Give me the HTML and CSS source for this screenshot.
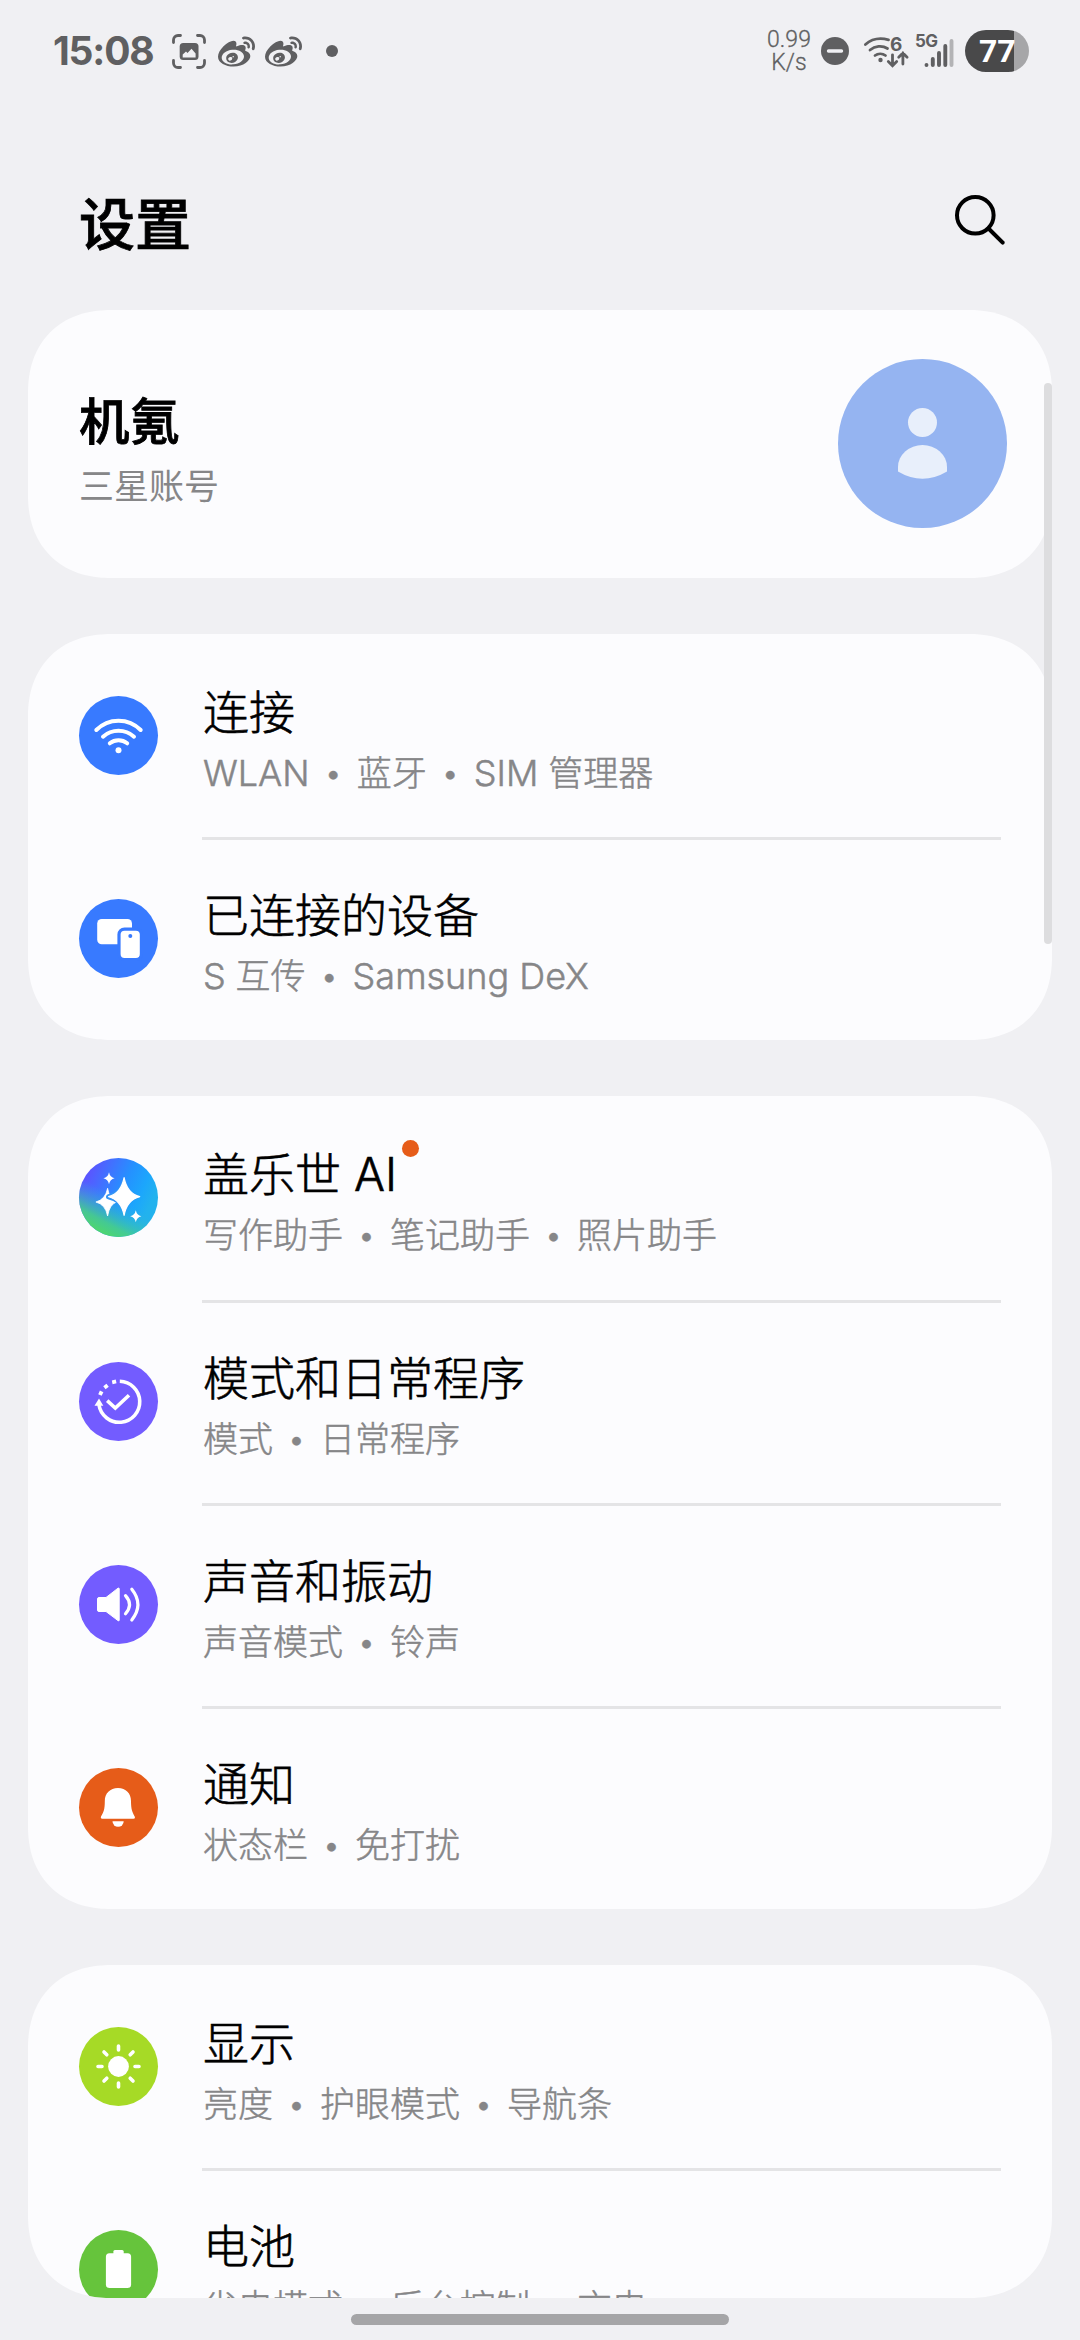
FILE: index.html
```html
<!DOCTYPE html>
<html lang="zh-CN">
<head>
<meta charset="utf-8">
<title>设置</title>
<link rel="stylesheet" href="styles.css">
</head>
<body>
<svg class="defs" width="0" height="0" aria-hidden="true">
  <defs>
    <symbol id="weibo" viewBox="0 2 24 20"><path d="M10.098 20.323c-3.977.391-7.414-1.406-7.672-4.02-.259-2.609 2.759-5.047 6.74-5.441 3.979-.394 7.413 1.404 7.671 4.018.259 2.6-2.759 5.049-6.737 5.439l-.002.004zM9.05 17.219c-.384.616-1.208.884-1.829.602-.612-.279-.793-.991-.406-1.593.379-.595 1.176-.861 1.793-.601.622.263.82.972.442 1.592zm1.27-1.627c-.141.237-.449.353-.689.253-.236-.09-.313-.361-.177-.586.138-.227.436-.346.672-.24.239.09.315.36.18.601l.014-.028zm.176-2.719c-1.893-.493-4.033.45-4.857 2.118-.836 1.704-.026 3.591 1.886 4.21 1.983.64 4.318-.341 5.132-2.179.8-1.793-.201-3.642-2.161-4.149zm7.563-1.224c-.346-.105-.57-.18-.405-.615.375-.977.42-1.804 0-2.404-.781-1.112-2.915-1.053-5.364-.03 0 0-.766.331-.571-.271.376-1.217.315-2.224-.27-2.809-1.338-1.337-4.869.045-7.888 3.08C1.309 10.87 0 13.273 0 15.348c0 3.981 5.099 6.395 10.086 6.395 6.536 0 10.888-3.801 10.888-6.82 0-1.822-1.547-2.854-2.915-3.284v.01zm1.908-5.092c-.766-.856-1.908-1.187-2.96-.962-.436.09-.706.511-.616.932.09.42.511.691.932.602.511-.105 1.067.044 1.442.465.376.421.466.977.316 1.473-.136.406.089.856.51.992.405.119.857-.105.992-.512.33-1.021.12-2.178-.646-3.035l.03.045zm2.418-2.195c-1.576-1.757-3.905-2.419-6.054-1.968-.496.104-.812.587-.706 1.081.104.496.586.813 1.082.707 1.532-.331 3.185.15 4.296 1.383 1.112 1.246 1.429 2.943.947 4.416-.165.48.106 1.007.586 1.157.479.165.991-.104 1.157-.586.675-2.088.241-4.478-1.338-6.235l.03.045z"/></symbol>
    <linearGradient id="ai-base" x1="0.1" y1="0.22" x2="0.9" y2="0.6">
      <stop offset="0" stop-color="#5a55ff"/><stop offset="0.55" stop-color="#2492ff"/><stop offset="0.8" stop-color="#1ca6fc"/><stop offset="1" stop-color="#22b2ee"/>
    </linearGradient>
    <linearGradient id="ai-green" x1="0.18" y1="0.9" x2="0.42" y2="0.46">
      <stop offset="0" stop-color="#4fd76c"/><stop offset="0.3" stop-color="#47cf88" stop-opacity="0.9"/><stop offset="1" stop-color="#28b0e8" stop-opacity="0"/>
    </linearGradient>
  </defs>
</svg>
<div class="screen">
  <header class="status">
    <div class="status-left">
      <span class="clock">15:08</span>
      <svg class="shot" viewBox="0 0 34 35" width="34" height="35">
        <g fill="none" stroke="#5f5f61" stroke-width="2.8" stroke-linecap="round"><path d="M1.5 8.5V6a4.5 4.5 0 0 1 4.5-4.5H8.5M25.5 1.5H28A4.500 4.500 0 0 1 32.500 6V8.500M32.500 26.500V29a4.500 4.500 0 0 1-4.500 4.500H25.500M8.500 33.500H6A4.500 4.500 0 0 1 1.500 29V26.500"/></g>
        <rect x="7.700" y="9" width="18.800" height="17" rx="3.500" fill="#5f5f61"/>
        <path d="M10.700 23.500V20.500L14 17.500L15.500 19L19.500 14.800L23.600 19.500V23.500Z" fill="#f0f0f3"/>
      </svg>
      <svg class="weibo" width="37" height="31"><use href="#weibo"/></svg>
      <svg class="weibo weibo-second" width="37" height="31"><use href="#weibo"/></svg>
      <span class="more-dot"></span>
    </div>
    <div class="status-right">
      <div class="speed"><span>0.99</span><span>K/s</span></div>
      <svg class="dnd" viewBox="0 0 28 28" width="28" height="28"><circle cx="14" cy="14" r="14" fill="#5f5f61"/><path d="M7.500 14H20.500" stroke="#f0f0f3" stroke-width="3.400" stroke-linecap="round"/></svg>
      <svg class="wifi" viewBox="0 0 46 34" width="46" height="34">
        <g fill="none" stroke="#5f5f61" stroke-width="2.800" stroke-linecap="round">
          <path d="M2.400 10.500C8 5.500 16 3.200 25.500 5.800"/><path d="M7 16C12 11.800 19 11 24.500 14.500"/><path d="M12 21.500C15 19.200 19.500 19.200 22.500 21.500"/>
          <path d="M29.500 20.800V31.500M25.300 27.500L29.500 31.700L33.700 27.500M39.900 30V19.200M35.700 23.200L39.900 19L44.100 23.200"/>
        </g>
        <circle cx="17.500" cy="26" r="2.200" fill="#5f5f61"/>
        <text class="wifi-gen" x="27" y="16.500">6</text>
      </svg>
      <svg class="signal" viewBox="0 0 40 36" width="40" height="36">
        <text class="net" x="0" y="14.200">5G</text>
        <g stroke="#5f5f61" stroke-width="3.900" stroke-linecap="round"><path d="M11.500 32V32.100M17.800 26V32M24 20V32M30.300 13V32"/><path d="M36.500 8V32" stroke="#b3b3b5"/></g>
      </svg>
      <div class="battery"><span>77</span></div>
    </div>
  </header>

  <div class="topbar">
    <h1>设置</h1>
    <svg class="search" viewBox="0 0 52 52" width="52" height="52"><g fill="none" stroke="#000" stroke-width="4" stroke-linecap="round"><circle cx="22.300" cy="22.300" r="18.300"/><path d="M35.500 35.500L49.700 49.700"/></g></svg>
  </div>

  <main class="list">
    <section class="card account">
      <div class="account-text">
        <div class="account-name">机氪</div>
        <div class="account-kind">三星账号</div>
      </div>
      <svg class="avatar" viewBox="0 0 169 169" width="169" height="169"><circle cx="84.500" cy="84.500" r="84.500" fill="#95b4f1"/><circle cx="84.500" cy="63.500" r="14.500" fill="#e8effb"/><path d="M60 112.500V108A24.500 22 0 0 1 109 108V112.500Q84.500 127 60 112.500Z" fill="#e8effb"/></svg>
    </section>

    <section class="card">
      <div class="row">
        <svg class="icon" viewBox="0 0 79 79"><circle cx="39.500" cy="39.500" r="39.500" fill="#387aff"/><g fill="none" stroke="#fff" stroke-width="4" stroke-linecap="round"><path d="M17.300 34A31 31 0 0 1 61.700 34"/><path d="M24 40.700A23 23 0 0 1 55 40.700"/><path d="M30.800 47.300A14 14 0 0 1 48.200 47.300"/></g><circle cx="39.500" cy="54.300" r="3" fill="#fff"/></svg>
        <div class="text"><div class="title">连接</div><div class="sub"><span class="latin">WLAN</span><i class="sep">•</i>蓝牙<i class="sep">•</i><span class="latin">SIM</span> 管理器</div></div>
      </div>
      <div class="row">
        <svg class="icon" viewBox="0 0 79 79"><circle cx="39.500" cy="39.500" r="39.500" fill="#387aff"/><rect x="18.200" y="20" width="34.800" height="25.300" rx="4.500" fill="#fff"/><rect x="40" y="30.100" width="22.400" height="30.400" rx="5.500" fill="#fff" stroke="#387aff" stroke-width="3.200"/><circle cx="51.300" cy="37" r="2" fill="#387aff"/></svg>
        <div class="text"><div class="title">已连接的设备</div><div class="sub"><span class="latin">S</span> 互传<i class="sep">•</i><span class="latin">Samsung DeX</span></div></div>
      </div>
    </section>

    <section class="card">
      <div class="row row-ai">
        <svg class="icon" viewBox="0 0 79 79"><circle cx="39.500" cy="39.500" r="39.500" fill="url(#ai-base)"/><circle cx="39.500" cy="39.500" r="39.500" fill="url(#ai-green)"/>
          <path d="M28.600 30.300Q30.500 41.500 37.500 44Q30.500 46.500 28.600 58Q26.500 46.500 16.900 44Q26.500 41.500 28.600 30.300Z" fill="#fff" stroke="#fff" stroke-width="0.800"/>
          <path d="M45.100 24Q47.500 36 57 38.700Q47.500 41.500 45.100 52Q42.500 41.500 29.500 38.700Q42.500 36 45.100 24Z" fill="#3595f4" stroke="#3595f4" stroke-width="5" stroke-linejoin="round"/>
          <path d="M45.100 19.700Q48 35.500 60.700 38.700Q48 42 45.100 57.300Q42 42 29.600 38.700Q42 35.500 45.100 19.700Z" fill="#fff" stroke="#fff" stroke-width="1.200" stroke-linejoin="round"/>
          <path d="M30 14.300Q31 19.300 35.600 20.300Q31 21.500 30 26.300Q29 21.500 24.400 20.300Q29 19.300 30 14.300ZM56.800 52.300Q57.800 57.300 62.400 58.300Q57.800 59.500 56.800 64.300Q55.800 59.500 51.200 58.300Q55.800 57.300 56.800 52.300Z" fill="#fff"/></svg>
        <div class="text"><div class="title">盖乐世 <span class="badged">AI<b class="badge"></b></span></div><div class="sub">写作助手<i class="sep">•</i>笔记助手<i class="sep">•</i>照片助手</div></div>
      </div>
      <div class="row">
        <svg class="icon" viewBox="0 0 79 79"><circle cx="39.500" cy="39.500" r="39.500" fill="#735cff"/><g fill="none" stroke="#fff" stroke-width="3.600"><path d="M40.800 19.300A20.500 20.500 0 1 1 20 43"/><path d="M28.200 38.700L36.300 46L50 33.300"/></g><path d="M20 36.500L24.300 43.800H15.500Z" fill="#fff"/><g fill="#fff"><rect x="33.200" y="18" width="4" height="3.800" transform="rotate(-12 35 20)"/><rect x="25" y="22.600" width="4" height="3.800" transform="rotate(-38 27 24.500)"/><rect x="19.800" y="29.300" width="4" height="3.800" transform="rotate(-65 21.800 31.200)"/></g></svg>
        <div class="text"><div class="title">模式和日常程序</div><div class="sub">模式<i class="sep">•</i>日常程序</div></div>
      </div>
      <div class="row">
        <svg class="icon" viewBox="0 0 79 79"><circle cx="39.500" cy="39.500" r="39.500" fill="#735cff"/><path d="M20 32.500H27L39 23.200Q40.200 22.500 40.200 24V55Q40.200 56.500 39 55.600L27 46.500H20Q18.500 46.500 18.500 45V34Q18.500 32.500 20 32.500Z" fill="#fff" stroke="#fff" stroke-linejoin="round"/><g fill="none" stroke="#fff" stroke-width="3.200" stroke-linecap="round"><path d="M46.500 30.600Q54.500 39.500 46.500 48.800"/><path d="M52.800 24.300Q65 39.500 52.800 55"/></g></svg>
        <div class="text"><div class="title">声音和振动</div><div class="sub">声音模式<i class="sep">•</i>铃声</div></div>
      </div>
      <div class="row">
        <svg class="icon" viewBox="0 0 79 79"><circle cx="39.500" cy="39.500" r="39.500" fill="#e65c19"/><path d="M39 20C47 20 52 25.500 52 33C52 42 53.500 44 55.700 48.500Q56.500 50.700 54.500 50.700H23.300Q21.300 50.700 22 48.500C24.500 44 25.800 42 25.800 33C25.800 25.500 31 20 39 20Z" fill="#fff"/><path d="M33.500 53.200H44.700A5.600 5.600 0 0 1 33.500 53.200Z" fill="#fff"/></svg>
        <div class="text"><div class="title">通知</div><div class="sub">状态栏<i class="sep">•</i>免打扰</div></div>
      </div>
    </section>

    <section class="card card-cut">
      <div class="row">
        <svg class="icon" viewBox="0 0 79 79"><circle cx="39.500" cy="39.500" r="39.500" fill="#a6da26"/><circle cx="39.500" cy="39.500" r="10.400" fill="#fff"/><g stroke="#fff" stroke-width="3.600" stroke-linecap="round"><path d="M39.500 19V23M39.500 56V60M19 39.500H23M56 39.500H60M25 25L27.800 27.800M51.200 51.200L54 54M25 54L27.800 51.200M51.200 27.800L54 25"/></g></svg>
        <div class="text"><div class="title">显示</div><div class="sub">亮度<i class="sep">•</i>护眼模式<i class="sep">•</i>导航条</div></div>
      </div>
      <div class="row">
        <svg class="icon" viewBox="0 0 79 79"><circle cx="39.500" cy="39.500" r="39.500" fill="#66c43c"/><rect x="26.900" y="23.200" width="25.200" height="34.800" rx="3.500" fill="#fff"/><rect x="34.400" y="20" width="10.300" height="6" rx="1.500" fill="#fff"/></svg>
        <div class="text"><div class="title">电池</div><div class="sub">省电模式<i class="sep">•</i>后台控制<i class="sep">•</i>充电</div></div>
      </div>
    </section>
  </main>
  <div class="scrollbar"></div>
  <div class="gesture"></div>
</div>
</body>
</html>
```
FILE: styles.css
```css
* { box-sizing: border-box; }
html, body { margin: 0; padding: 0; }
body {
  background: #f0f0f3;
  color: #000;
  font-family: Inter, "Noto Sans CJK SC", sans-serif;
}
svg { display: block; flex: none; overflow: visible; }
.defs { position: absolute; }

.screen {
  position: relative;
  width: 1080px;
  height: 2340px;
  overflow: hidden;
  display: flex;
  flex-direction: column;
  background: #f0f0f3;
}

/* status bar */
.status {
  height: 102px;
  display: flex;
  justify-content: space-between;
  padding: 0 51px 0 53px;
  color: #5f5f61;
}
.status-left, .status-right { display: flex; align-items: center; }
.clock {
  width: 119px;
  font-size: 39px;
  font-weight: 700;
  line-height: 46px;
  letter-spacing: -1.2px;
}
.weibo { margin-left: 12px; fill: #5f5f61; }
.weibo-second { margin-left: 10px; }
.more-dot { width: 12px; height: 12px; border-radius: 50%; background: #5f5f61; margin-left: 24px; }
.speed {
  display: flex;
  flex-direction: column;
  align-items: center;
  width: 44px;
  font: 300 23px/23px Roboto, sans-serif;
  -webkit-text-stroke: 0.3px currentColor;
}
.dnd { margin-left: 10px; }
.wifi { margin-left: 14px; }
.wifi-gen { font: 700 19px Inter, sans-serif; fill: #5f5f61; }
.signal { margin-left: 6px; }
.net { font: 700 17px Inter, sans-serif; fill: #5f5f61; letter-spacing: -0.6px; }
.battery {
  width: 64px;
  height: 42px;
  margin-left: 10px;
  border-radius: 21px;
  background: linear-gradient(90deg, #49494a 0 49px, #a6a6a8 49px);
  color: #fff;
  font: 700 32px/43px Roboto, sans-serif;
  padding-left: 14px;
}

/* title bar */
.topbar {
  height: 208px;
  display: flex;
  justify-content: space-between;
  padding: 83px 75px 0 79px;
}
h1 {
  margin: 0;
  font-size: 56px;
  font-weight: 500;
  line-height: 80px;
  -webkit-text-stroke: 0.8px currentColor;
}
.search { margin-top: 8px; }

/* cards */
.list {
  display: flex;
  flex-direction: column;
  gap: 56px;
  padding: 0 28px;
}
.card {
  border-radius: 74px;
  background: #fcfcfe;
  overflow: hidden;
}
@supports (corner-shape: superellipse(1.15)) {
  .card { border-radius: 83px; corner-shape: superellipse(1.15); }
}
.account {
  height: 268px;
  display: flex;
  align-items: center;
  justify-content: space-between;
  padding: 0 45px 1px 51px;
}
.account-text { padding-top: 8px; }
.account-name {
  font-size: 50.5px;
  font-weight: 500;
  line-height: 72px;
  -webkit-text-stroke: 0.8px currentColor;
}
.account-kind { font-size: 35px; line-height: 48px; margin-top: 4px; color: #868688; }
.card-cut { height: 333px; }
.row {
  height: 203px;
  display: flex;
  padding: 0 51px;
}
.row-ai { height: 204px; }
.icon { width: 79px; height: 79px; margin: 62px 44px 0 0; }
.text { flex: 1; padding: 48px 0 0 1px; }
.row + .row .text { border-top: 3px solid #e4e4e6; padding-top: 45px; }
.title {
  font-size: 46px;
  font-weight: 300;
  line-height: 60px;
  -webkit-text-stroke: 0.6px currentColor;
}
.sub {
  font-size: 35px;
  font-weight: 300;
  line-height: 48px;
  margin-top: 7px;
  color: #868688;
  -webkit-text-stroke: 0.5px currentColor;
}
.latin { font-size: 36px; }
.sep {
  display: inline-block;
  width: 47px;
  font-size: 31px;
  font-style: normal;
  line-height: 1;
  text-align: center;
  vertical-align: 2px;
}
.badged { position: relative; }
.badge {
  position: absolute;
  left: 100%;
  top: -6px;
  width: 17px;
  height: 17px;
  margin-left: 5px;
  border-radius: 50%;
  background: #e65c19;
}

/* overlays */
.scrollbar {
  position: absolute;
  left: 1044px;
  top: 383px;
  width: 8px;
  height: 561px;
  border-radius: 4px;
  background: #dddddf;
}
.gesture {
  position: absolute;
  left: 351px;
  bottom: 15px;
  width: 378px;
  height: 11px;
  border-radius: 6px;
  background: #a5a5a7;
}
```
